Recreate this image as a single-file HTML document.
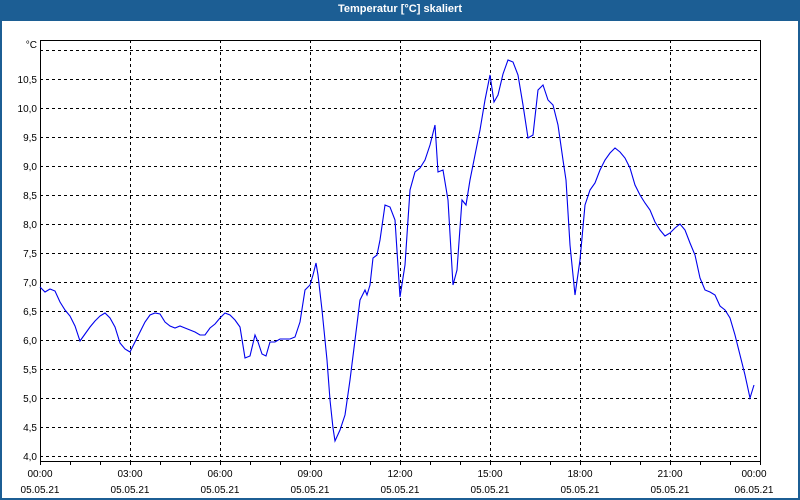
<!DOCTYPE html>
<html><head><style>
html,body{margin:0;padding:0;}
body{width:800px;height:500px;position:relative;background:#1c5e94;overflow:hidden;font-family:"Liberation Sans",sans-serif;}
.title{position:absolute;left:0;top:0;width:800px;height:20px;line-height:19px;text-align:center;color:#fff;font-weight:bold;font-size:11px;}
.panel{position:absolute;left:2px;top:21px;width:796px;height:477px;background:#fff;}
svg{position:absolute;left:0;top:0;}
text{font-family:"Liberation Sans",sans-serif;font-size:10px;fill:#000;}
</style></head><body>
<div class="title">Temperatur [°C] skaliert</div>
<div class="panel"></div>
<svg width="800" height="500" viewBox="0 0 800 500">
<g stroke="#000" stroke-width="1" stroke-dasharray="3,3" fill="none" shape-rendering="crispEdges">
<line x1="40" y1="50.5" x2="760" y2="50.5"/>
<line x1="40" y1="79.5" x2="760" y2="79.5"/>
<line x1="40" y1="108.5" x2="760" y2="108.5"/>
<line x1="40" y1="137.5" x2="760" y2="137.5"/>
<line x1="40" y1="166.5" x2="760" y2="166.5"/>
<line x1="40" y1="195.5" x2="760" y2="195.5"/>
<line x1="40" y1="224.5" x2="760" y2="224.5"/>
<line x1="40" y1="253.5" x2="760" y2="253.5"/>
<line x1="40" y1="282.5" x2="760" y2="282.5"/>
<line x1="40" y1="311.5" x2="760" y2="311.5"/>
<line x1="40" y1="340.5" x2="760" y2="340.5"/>
<line x1="40" y1="369.5" x2="760" y2="369.5"/>
<line x1="40" y1="398.5" x2="760" y2="398.5"/>
<line x1="40" y1="427.5" x2="760" y2="427.5"/>
<line x1="40" y1="456.5" x2="760" y2="456.5"/>
<line x1="130.5" y1="40" x2="130.5" y2="461"/>
<line x1="220.5" y1="40" x2="220.5" y2="461"/>
<line x1="310.5" y1="40" x2="310.5" y2="461"/>
<line x1="400.5" y1="40" x2="400.5" y2="461"/>
<line x1="490.5" y1="40" x2="490.5" y2="461"/>
<line x1="580.5" y1="40" x2="580.5" y2="461"/>
<line x1="670.5" y1="40" x2="670.5" y2="461"/>
</g>
<g stroke="#000" stroke-width="1" fill="none" shape-rendering="crispEdges">
<path d="M40.5 461.5 V40.5 H760.5 V461.5 H40.5"/>
<path d="M40.5 461v4 M70.5 461v4 M100.5 461v4 M130.5 461v4 M160.5 461v4 M190.5 461v4 M220.5 461v4 M250.5 461v4 M280.5 461v4 M310.5 461v4 M340.5 461v4 M370.5 461v4 M400.5 461v4 M430.5 461v4 M460.5 461v4 M490.5 461v4 M520.5 461v4 M550.5 461v4 M580.5 461v4 M610.5 461v4 M640.5 461v4 M670.5 461v4 M700.5 461v4 M730.5 461v4 M760.5 461v4"/>
</g>
<polyline fill="none" stroke="#0000ee" stroke-width="1.1" points="40,287 45,292 50,289 55,291 60,302 65,310 70,316 75,326 80,341 85,334 90,327 95,321 100,316 105,313 110,318 115,327 120,343 125,349 130,352 135,342 140,332 145,322 150,315 155,313 160,314 165,322 170,326 175,328 180,326 185,328 190,330 195,332 200,335 205,335 210,328 215,324 220,318 225,313 230,315 235,320 240,327 245,358 250,356 255,335 258,342 262,354 266,356 270,342 275,342 280,339 290,339 295,337 300,322 305,290 310,285 313,275 316,263 318,275 322,310 327,360 330,400 333,428 335,441 340,430 345,415 350,380 355,340 360,300 365,290 367,295 370,285 373,258 377,255 380,240 385,205 390,207 395,220 400,297 405,265 410,190 415,172 420,168 425,160 430,145 435,125 438,172 443,170 448,200 453,285 457,270 462,200 466,205 470,180 475,155 480,130 485,100 490,75 494,102 498,95 503,74 508,60 513,62 518,75 523,105 528,138 533,135 538,90 543,85 548,100 553,105 558,125 563,160 566,180 570,245 575,295 580,260 585,205 590,190 595,183 600,170 605,160 610,153 615,148 620,152 625,158 630,168 635,185 640,195 645,203 650,210 655,222 660,230 665,236 670,233 675,228 680,224 685,230 690,243 695,255 700,278 705,290 710,292 715,295 720,306 725,310 730,318 735,335 740,355 745,375 750,398 754,385"/>
<g text-anchor="end">
<text x="37" y="48">°C</text>
<text x="37" y="83">10,5</text>
<text x="37" y="112">10,0</text>
<text x="37" y="141">9,5</text>
<text x="37" y="170">9,0</text>
<text x="37" y="199">8,5</text>
<text x="37" y="228">8,0</text>
<text x="37" y="257">7,5</text>
<text x="37" y="286">7,0</text>
<text x="37" y="315">6,5</text>
<text x="37" y="344">6,0</text>
<text x="37" y="373">5,5</text>
<text x="37" y="402">5,0</text>
<text x="37" y="431">4,5</text>
<text x="37" y="460">4,0</text>
</g>
<g text-anchor="middle">
<text x="40" y="477">00:00</text><text x="40" y="493">05.05.21</text>
<text x="130" y="477">03:00</text><text x="130" y="493">05.05.21</text>
<text x="220" y="477">06:00</text><text x="220" y="493">05.05.21</text>
<text x="310" y="477">09:00</text><text x="310" y="493">05.05.21</text>
<text x="400" y="477">12:00</text><text x="400" y="493">05.05.21</text>
<text x="490" y="477">15:00</text><text x="490" y="493">05.05.21</text>
<text x="580" y="477">18:00</text><text x="580" y="493">05.05.21</text>
<text x="670" y="477">21:00</text><text x="670" y="493">05.05.21</text>
<text x="754" y="477">00:00</text><text x="754" y="493">06.05.21</text>
</g>
</svg>
</body></html>
